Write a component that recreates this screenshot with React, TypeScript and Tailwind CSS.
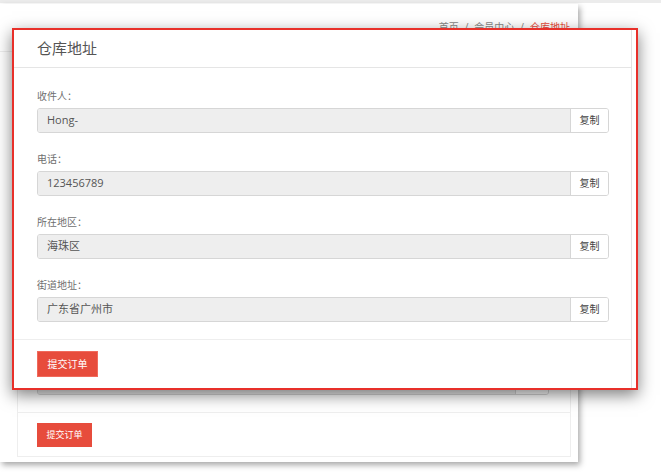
import React from "react";

const font = { fontFamily: '"Open Sans", "Noto Sans CJK SC", sans-serif' };

function Field({ label, value, last }: { label: string; value: string; last?: boolean }) {
  return (
    <div className={last ? "" : "mb-[18px]"}>
      <div className="h-[16px] leading-[16px] text-[10px] text-[#6f6f6f]">{label}</div>
      <div className="mt-[4px] flex h-[25px] w-[572px] rounded-[3px] border border-[#d6d6d6] overflow-hidden">
        <div className="flex-1 bg-[#eeeeee] pl-[9px] flex items-center text-[11px] text-[#555]">{value}</div>
        <div className="w-[38px] border-l border-[#d6d6d6] bg-white flex items-center justify-center text-[10px] text-[#444]">
          复制
        </div>
      </div>
    </div>
  );
}

export default function App() {
  return (
    <div className="relative w-[661px] h-[476px] bg-white overflow-hidden" style={font}>
      <div className="h-[3px] bg-[#ececec]" />
      {/* background page card */}
      <div className="mt-[1px] w-[578px] bg-white shadow-[2px_3px_6px_rgba(0,0,0,0.35)] pb-[5px]">
        <div className="h-[48px] border-b border-[#eeeeee] flex items-center justify-end pr-[8px] text-[10px] text-[#888]">
          <span>首页</span>
          <span className="mx-[6px]">/</span>
          <span>会员中心</span>
          <span className="mx-[6px]">/</span>
          <span className="text-[#e74c3c]">仓库地址</span>
        </div>
        <div className="mt-[8px] ml-[17px] w-[554px] border border-[#eeeeee]">
          <div className="h-[351px] flex flex-col justify-end pl-[19px] pb-[17px]">
            <div className="flex h-[25px] w-[512px] rounded-[3px] border border-[#d6d6d6] overflow-hidden">
              <div className="flex-1 bg-[#eeeeee]" />
              <div className="w-[33px] border-l border-[#d6d6d6] bg-white" />
            </div>
          </div>
          <div className="border-t border-[#eeeeee] pt-[10px] pb-[9px] pl-[19px]">
            <div className="w-[55px] h-[24px] bg-[#e74c3c] text-white text-[9px] flex items-center justify-center">
              提交订单
            </div>
          </div>
        </div>
      </div>

      {/* modal with red highlight */}
      <div className="absolute left-[12px] top-[28px] w-[626px] border-2 border-[#e8302a] bg-white shadow-[0_5px_15px_rgba(0,0,0,0.5)] pr-[4px]">
        <div className="w-[618px] border-r border-[#e2e2e2]">
          <div className="h-[38px] border-b border-[#e5e5e5] flex items-center pl-[23px] text-[15px] text-[#555]">
            仓库地址
          </div>
          <div className="pt-[20px] pb-[17px] pl-[23px]">
            <Field label="收件人：" value="Hong-" />
            <Field label="电话：" value="123456789" />
            <Field label="所在地区：" value="海珠区" />
            <Field label="街道地址：" value="广东省广州市" last />
          </div>
          <div className="border-t border-[#eeeeee] pt-[11px] pb-[11px] pl-[23px]">
            <div className="w-[61px] h-[26px] bg-[#e74c3c] border border-[#f06a5c] text-white text-[10px] flex items-center justify-center">
              提交订单
            </div>
          </div>
        </div>
      </div>
    </div>
  );
}
